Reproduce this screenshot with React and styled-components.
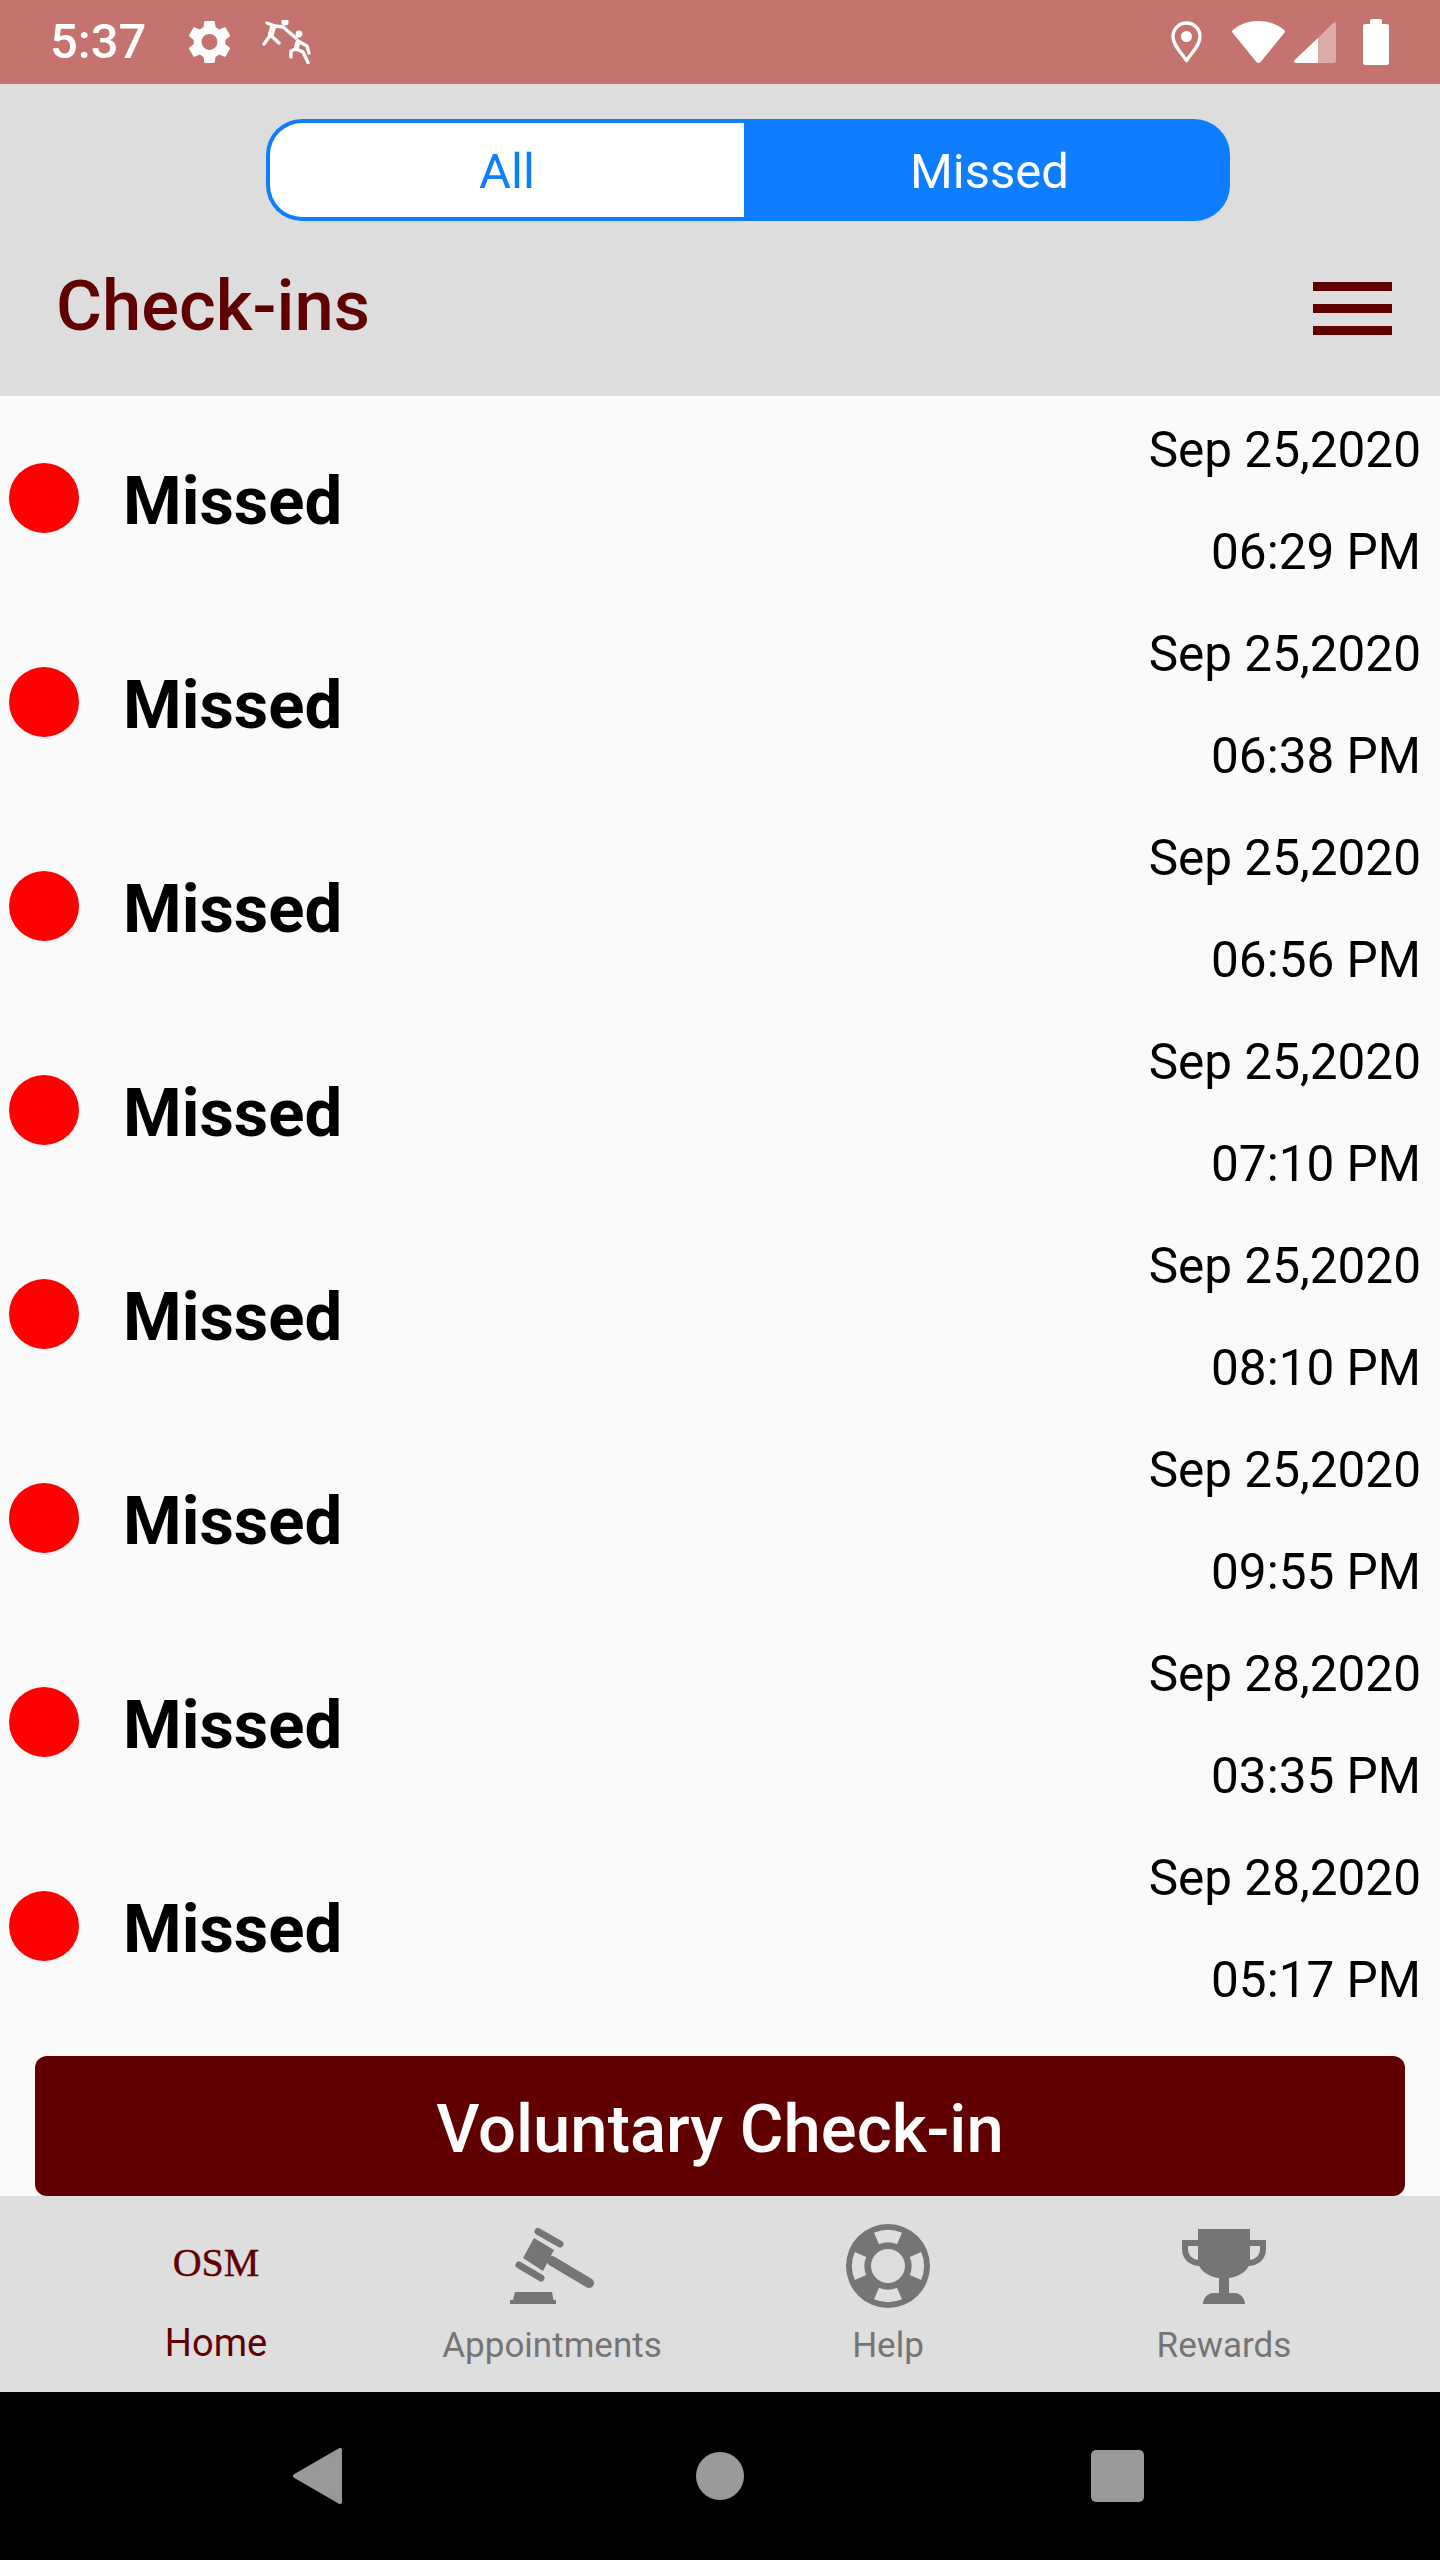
import React from "react";
import styled, { createGlobalStyle } from "styled-components";

const checkins = [
  { date: "Sep 25,2020", time: "06:29 PM" },
  { date: "Sep 25,2020", time: "06:38 PM" },
  { date: "Sep 25,2020", time: "06:56 PM" },
  { date: "Sep 25,2020", time: "07:10 PM" },
  { date: "Sep 25,2020", time: "08:10 PM" },
  { date: "Sep 25,2020", time: "09:55 PM" },
  { date: "Sep 28,2020", time: "03:35 PM" },
  { date: "Sep 28,2020", time: "05:17 PM" },
];

const GearIcon = () => (
  <svg width="43" height="44" viewBox="2.6 2 18.8 20" fill="#fff">
    <path d="M19.14 12.94c.04-.3.06-.61.06-.94 0-.32-.02-.64-.07-.94l2.03-1.58c.18-.14.23-.41.12-.61l-1.92-3.32c-.12-.22-.37-.29-.59-.22l-2.39.96c-.5-.38-1.03-.7-1.62-.94l-.36-2.54c-.04-.24-.24-.41-.48-.41h-3.84c-.24 0-.43.17-.47.41l-.36 2.54c-.59.24-1.13.57-1.62.94l-2.39-.96c-.22-.08-.47 0-.59.22L2.74 8.87c-.12.21-.08.47.12.61l2.03 1.58c-.05.3-.09.63-.09.94s.02.64.07.94l-2.03 1.58c-.18.14-.23.41-.12.61l1.92 3.32c.12.22.37.29.59.22l2.39-.96c.5.38 1.03.7 1.62.94l.36 2.54c.05.24.24.41.48.41h3.84c.24 0 .44-.17.47-.41l.36-2.54c.59-.24 1.13-.56 1.62-.94l2.39.96c.22.08.47 0 .59-.22l1.92-3.32c.12-.22.07-.47-.12-.61l-2.01-1.58zM12 15.6c-1.98 0-3.6-1.62-3.6-3.6s1.62-3.6 3.6-3.6 3.6 1.62 3.6 3.6-1.62 3.6-3.6 3.6z" />
  </svg>
);

const ClimbersIcon = () => (
  <svg width="49" height="44" viewBox="7 7 49 44" fill="none" stroke="#fff" strokeWidth="3.4" strokeLinecap="round" strokeLinejoin="round">
    <circle cx="30" cy="9" r="3.6" fill="#fff" stroke="none" />
    <circle cx="44" cy="21" r="3.4" fill="#fff" stroke="none" />
    <path d="M12 10 L20 13 L15.5 22 L9 31 M15.5 22 L24 30 M20 13 L28 14 L41 25" />
    <path d="M18 14 L16 21" strokeWidth="6" />
    <path d="M43 28 L41 36 L36 38 L36 44 M41 36 L48 39 L53 49.5 M43 28 L52 33 L54 40" />
    <path d="M43 29 L41.5 34" strokeWidth="5" />
  </svg>
);

const PinIcon = () => (
  <svg width="31" height="43" viewBox="0 0 31 43" fill="none">
    <path d="M15.5 39.5 C10 31 2 24.5 2 15.5 C2 8 8 2 15.5 2 C23 2 29 8 29 15.5 C29 24.5 21 31 15.5 39.5 Z" stroke="#fff" strokeWidth="3.4" strokeLinejoin="round" />
    <circle cx="15.5" cy="15.5" r="5.5" fill="#fff" />
  </svg>
);

const WifiIcon = () => (
  <svg width="53" height="42" viewBox="0 0 53 42" fill="#fff">
    <path d="M0.8 9 C8 3 16.5 0 26.5 0 C36.5 0 45 3 52.2 9 C53 9.8 53 10.6 52.6 11.4 L28.6 41 C27.4 42.2 25.6 42.2 24.4 41 L0.4 11.4 C0 10.6 0 9.8 0.8 9 Z" />
  </svg>
);

const SignalIcon = () => (
  <svg width="42" height="41" viewBox="0 0 42 41" fill="#fff">
    <path d="M24 16 L39 1 C40.5 -0.4 42 0.4 42 2 V39 C42 40.2 41.2 41 40 41 H24 Z" opacity="0.4" />
    <path d="M24 16 V41 H2 C0.2 41 -0.6 39.4 0.6 38 Z" />
  </svg>
);

const GavelIcon = () => (
  <svg width="84" height="76" viewBox="0 0 84 76" fill="#757575">
    <path d="M24 10 L44 22 L33 43 L13 30 Z" />
    <path d="M42 33 L79 55" stroke="#757575" strokeWidth="10" strokeLinecap="round" />
    <path d="M28 3.5 L50 16" stroke="#757575" strokeWidth="7" strokeLinecap="round" />
    <path d="M9 37 L31 50" stroke="#757575" strokeWidth="7" strokeLinecap="round" />
    <path d="M5 64 H42 L43.5 72 H46 V76 H0 V72 H3 Z" />
  </svg>
);

const LifebuoyIcon = () => (
  <svg width="84" height="84" viewBox="0 0 84 84">
    <circle cx="42" cy="42" r="42" fill="#757575" />
    <circle cx="42" cy="42" r="17" fill="#dedede" />
    {[0, 90, 180, 270].map((angle) => (
      <path
        key={angle}
        d="M28 8.8 A36 36 0 0 1 56 8.8 L51 20.2 A23.6 23.6 0 0 0 33 20.2 Z"
        fill="#dedede"
        transform={`rotate(${angle} 42 42)`}
      />
    ))}
  </svg>
);

const TrophyIcon = () => (
  <svg width="84" height="75" viewBox="0 0 84 75" fill="#757575">
    <path d="M16 0 H68 V32 C68 40 58 48 47 49 V64 H53 C58 64 63 69 63 75 H21 C21 69 26 64 31 64 H37 V49 C26 48 16 40 16 32 Z" />
    <path d="M17 14 H3 V20 C3 28 9 34 18 34" fill="none" stroke="#757575" strokeWidth="6" />
    <path d="M67 14 H81 V20 C81 28 75 34 66 34" fill="none" stroke="#757575" strokeWidth="6" />
  </svg>
);

const BackIcon = () => (
  <svg width="49" height="56" viewBox="0 0 49 56" fill="#999" stroke="#999" strokeWidth="4" strokeLinejoin="round">
    <path d="M47 2 V54 L2 28 Z" />
  </svg>
);

const App = () => {
  return (
    <>
      <GlobalStyle />
      <Screen>
        <StatusBar>
          <Clock>5:37</Clock>
          <StatusLeftIcons>
            <GearIcon />
            <ClimbersIcon />
          </StatusLeftIcons>
          <StatusRightIcons>
            <PinIcon />
            <WifiIcon />
            <SignalIcon />
            <Battery />
          </StatusRightIcons>
        </StatusBar>

        <Header>
          <Segments>
            <Segment>All</Segment>
            <Segment $active>Missed</Segment>
          </Segments>
          <TitleRow>
            <Title>Check-ins</Title>
            <MenuButton>
              <MenuLine />
              <MenuLine />
              <MenuLine />
            </MenuButton>
          </TitleRow>
        </Header>

        <Content>
          <List>
            {checkins.map((item) => (
              <Row key={item.time}>
                <Dot />
                <RowLabel>Missed</RowLabel>
                <RowDate>
                  <DateLine>{item.date}</DateLine>
                  <DateLine>{item.time}</DateLine>
                </RowDate>
              </Row>
            ))}
          </List>
          <CheckinButton>Voluntary Check-in</CheckinButton>
        </Content>

        <TabBar>
          <Tab>
            <TabIcon>
              <LogoText>OSM</LogoText>
            </TabIcon>
            <TabLabel $active>Home</TabLabel>
          </Tab>
          <Tab>
            <TabIcon>
              <GavelIcon />
            </TabIcon>
            <TabLabel>Appointments</TabLabel>
          </Tab>
          <Tab>
            <TabIcon>
              <LifebuoyIcon />
            </TabIcon>
            <TabLabel>Help</TabLabel>
          </Tab>
          <Tab>
            <TabIcon>
              <TrophyIcon />
            </TabIcon>
            <TabLabel>Rewards</TabLabel>
          </Tab>
        </TabBar>

        <NavBar>
          <BackIcon />
          <HomeButton />
          <RecentsButton />
        </NavBar>
      </Screen>
    </>
  );
};

const GlobalStyle = createGlobalStyle`
  body {
    margin: 0;
    background: #fafafa;
    font-family: Roboto, "Liberation Sans", sans-serif;
  }
`;

const Screen = styled.div`
  display: flex;
  flex-direction: column;
  width: 1440px;
  height: 2560px;
  overflow: hidden;
`;

const StatusBar = styled.div`
  display: flex;
  align-items: center;
  height: 84px;
  padding: 0 51px 0 50px;
  box-sizing: border-box;
  background-color: #c4736e;
  color: #fff;
`;

const Clock = styled.span`
  font-size: 49px;
  font-weight: 500;
  line-height: 84px;
  width: 138px;
`;

const StatusLeftIcons = styled.div`
  display: flex;
  align-items: center;
  gap: 31px;
`;

const StatusRightIcons = styled.div`
  display: flex;
  align-items: center;
  gap: 9px;
  margin-left: auto;

  svg:first-child {
    margin-right: 21px;
  }
`;

const Battery = styled.div`
  position: relative;
  width: 26px;
  height: 41px;
  margin: 5px 0 0 18px;
  border-radius: 2px;
  background: #fff;

  &::before {
    content: "";
    position: absolute;
    top: -5px;
    left: 7px;
    width: 12px;
    height: 6px;
    border-radius: 2px 2px 0 0;
    background: #fff;
  }
`;

const Header = styled.header`
  background-color: #dddddd;
  height: 312px;
  padding-top: 35px;
  box-sizing: border-box;
`;

const Segments = styled.div`
  display: flex;
  width: 964px;
  height: 102px;
  margin-left: 266px;
`;

const Segment = styled.div`
  display: flex;
  align-items: center;
  justify-content: center;
  box-sizing: border-box;
  height: 100%;
  padding-top: 2px;
  padding-left: ${(props) => (props.$active ? "5px" : "0")};
  font-size: 49px;
  border: 4px solid #0e7dff;
  width: ${(props) => (props.$active ? "486px" : "478px")};
  color: ${(props) => (props.$active ? "#fff" : "#0e7dff")};
  background: ${(props) => (props.$active ? "#0e7dff" : "#fff")};
  border-radius: ${(props) => (props.$active ? "0 36px 36px 0" : "36px 0 0 36px")};
  border-right-width: ${(props) => (props.$active ? "4px" : "0")};
`;

const TitleRow = styled.div`
  display: flex;
  align-items: center;
  justify-content: space-between;
  height: 175px;
  padding: 0 48px 0 56px;
`;

const Title = styled.h1`
  margin: 0 0 6px;
  font-size: 70.5px;
  font-weight: 500;
  color: #600000;
`;

const MenuButton = styled.div`
  display: flex;
  flex-direction: column;
  gap: 13px;
  width: 79px;
`;

const MenuLine = styled.span`
  display: block;
  height: 9px;
  background: #600000;
`;

const Content = styled.main`
  flex: 1;
  background: #fafafa;
`;

const List = styled.div`
  display: flex;
  flex-direction: column;
`;

const Row = styled.div`
  display: flex;
  align-items: center;
  height: 204px;
  padding: 0 19px 0 9px;
`;

const Dot = styled.span`
  width: 70px;
  height: 70px;
  border-radius: 50%;
  background: #ff0000;
`;

const RowLabel = styled.span`
  margin: 6px 0 0 44px;
  font-size: 67px;
  font-weight: 700;
  color: #000;
`;

const RowDate = styled.div`
  margin: 5px 0 0 auto;
  text-align: right;
`;

const DateLine = styled.div`
  font-size: 49.5px;
  line-height: 102px;
  color: #000;
`;

const CheckinButton = styled.div`
  display: flex;
  align-items: center;
  justify-content: center;
  box-sizing: border-box;
  height: 140px;
  margin: 28px 35px 0;
  padding-top: 6px;
  border-radius: 12px;
  background: #600000;
  color: #fff;
  font-size: 67px;
  font-weight: 500;
`;

const TabBar = styled.nav`
  display: grid;
  grid-template-columns: repeat(4, 336px);
  height: 196px;
  padding: 0 48px;
  background: #dedede;
`;

const Tab = styled.div`
  display: flex;
  flex-direction: column;
  align-items: center;
`;

const TabIcon = styled.div`
  display: flex;
  align-items: center;
  justify-content: center;
  height: 84px;
  margin-top: 28px;
`;

const LogoText = styled.span`
  margin-bottom: 8px;
  font-family: "Liberation Serif", serif;
  font-size: 40px;
  color: #600000;
  -webkit-text-stroke: 0.4px #600000;
`;

const TabLabel = styled.span`
  margin-top: ${(props) => (props.$active ? "13px" : "16px")};
  font-size: ${(props) => (props.$active ? "38px" : "35px")};
  line-height: 44px;
  color: ${(props) => (props.$active ? "#600000" : "#757575")};
`;

const NavBar = styled.div`
  display: flex;
  align-items: center;
  height: 168px;
  padding-left: 293px;
  background: #000;
`;

const HomeButton = styled.span`
  width: 48px;
  height: 48px;
  margin-left: 354px;
  border-radius: 50%;
  background: #999;
`;

const RecentsButton = styled.span`
  width: 53px;
  height: 52px;
  margin-left: 347px;
  border-radius: 5px;
  background: #999;
`;

export default App;
